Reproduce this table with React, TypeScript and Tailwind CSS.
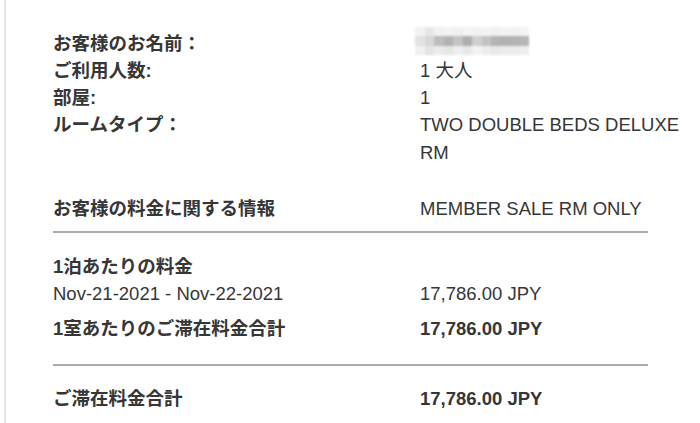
const font = {
  fontFamily: '"Liberation Sans", "Noto Sans CJK JP", sans-serif',
};

function Row({
  label,
  value,
  bold = false,
  className = "",
}: {
  label: React.ReactNode;
  value?: React.ReactNode;
  bold?: boolean;
  className?: string;
}) {
  return (
    <div className={`grid grid-cols-[367px_270px] ${className}`}>
      <div className="font-bold">{label}</div>
      <div className={bold ? "font-bold" : ""}>{value}</div>
    </div>
  );
}

// pixelated name (mosaic), 3 rows of ~9px blocks
const mosaic = [
  ["#f2f2f2", "#e6e6e6", "#f1f1f1", "#f3f3f3", "#f0f0f0", "#f4f4f4", "#f2f2f2", "#f3f3f3", "#f1f1f1", "#f3f3f3", "#f2f2f2", "#f4f4f4"],
  ["#e2e2e2", "#d8d8d8", "#bdbdbd", "#b2b2b2", "#c4c4c4", "#aeaeae", "#cfcfcf", "#c2c2c2", "#b4b4b4", "#b2b2b2", "#b4b4b4", "#b6b6b6"],
  ["#f1f1f1", "#e4e4e4", "#ececec", "#e6e6e6", "#eeeeee", "#e8e8e8", "#f2f2f2", "#ededed", "#e9e9e9", "#ececec", "#ebebeb", "#eeeeee"],
];

function BlurredName() {
  return (
    <div className="relative h-[27px]">
      <div className="absolute left-[-5px] top-[-3px] flex flex-col blur-[1px]">
        {mosaic.map((row, r) => (
          <div key={r} className={`flex ${r === 1 ? "h-[10px]" : "h-[9px]"}`}>
            {row.map((c, i) => (
              <div key={i} className="h-full w-[9.5px]" style={{ backgroundColor: c }} />
            ))}
          </div>
        ))}
      </div>
    </div>
  );
}

export default function App() {
  return (
    <div className="min-h-[423px] bg-white" style={font}>
      <div className="ml-[4px] min-h-[423px] border-l-2 border-[#e6e6e6] pl-[47px] pt-[30px] text-[18.5px] leading-[27px] text-[#363636]">
        <Row label="お客様のお名前：" value={<BlurredName />} />
        <Row label="ご利用人数:" value="1 大人" />
        <Row label="部屋:" value="1" />
        <Row
          label="ルームタイプ："
          value={
            <span className="leading-[28px]">
              TWO DOUBLE BEDS DELUXE
              <br />
              RM
            </span>
          }
        />
        <Row
          className="mt-[28px]"
          label="お客様の料金に関する情報"
          value="MEMBER SALE RM ONLY"
        />
        <div className="mt-[9px] h-[2px] w-[595px] bg-[#ababab]" />

        <Row className="mt-[20px]" label="1泊あたりの料金" />
        <div className="grid grid-cols-[367px_270px]">
          <div>Nov-21-2021 - Nov-22-2021</div>
          <div>17,786.00 JPY</div>
        </div>
        <Row
          className="mt-[8px]"
          label="1室あたりのご滞在料金合計"
          value="17,786.00 JPY"
          bold
        />
        <div className="mt-[22px] h-[2px] w-[595px] bg-[#ababab]" />

        <Row
          className="mt-[19px]"
          label="ご滞在料金合計"
          value="17,786.00 JPY"
          bold
        />
      </div>
    </div>
  );
}
